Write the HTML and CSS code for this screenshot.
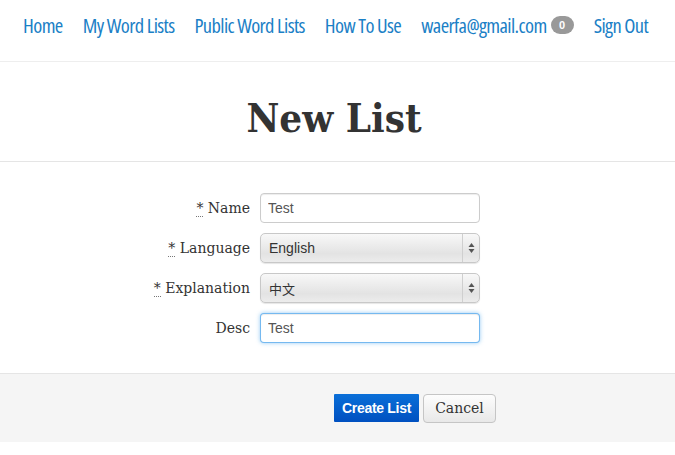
FILE: index.html
```html
<!DOCTYPE html>
<html>
<head>
<meta charset="utf-8">
<link rel="stylesheet" href="styles.css">
</head>
<body>
<nav class="nav">
  <a class="nav-link" href="#">Home</a>
  <a class="nav-link" href="#">My Word Lists</a>
  <a class="nav-link" href="#">Public Word Lists</a>
  <a class="nav-link" href="#">How To Use</a>
  <a class="nav-link" href="#">waerfa@gmail.com <span class="badge">0</span></a>
  <a class="nav-link" href="#">Sign Out</a>
</nav>
<header class="title">
  <h1>New List</h1>
</header>
<form class="form">
  <div class="row">
    <label class="label"><abbr class="req">*</abbr> Name</label>
    <input class="field" type="text" value="Test">
  </div>
  <div class="row">
    <label class="label"><abbr class="req">*</abbr> Language</label>
    <div class="select"><span>English</span><span class="arrows"><svg width="7" height="12" viewBox="0 0 7 12"><path d="M3.5 1 L6.5 5 H0.5Z M3.5 11 L6.5 7 H0.5Z" fill="#555"/></svg></span></div>
  </div>
  <div class="row">
    <label class="label"><abbr class="req">*</abbr> Explanation</label>
    <div class="select"><span class="cjk">中文</span><span class="arrows"><svg width="7" height="12" viewBox="0 0 7 12"><path d="M3.5 1 L6.5 5 H0.5Z M3.5 11 L6.5 7 H0.5Z" fill="#555"/></svg></span></div>
  </div>
  <div class="row">
    <label class="label">Desc</label>
    <input class="field focus" type="text" value="Test">
  </div>
  <div class="actions">
    <button class="btn-primary" type="button">Create List</button>
    <button class="btn" type="button">Cancel</button>
  </div>
</form>
</body>
</html>
```
FILE: styles.css
```css
html, body { margin: 0; padding: 0; background: #fff; }
body { width: 675px; height: 455px; overflow: hidden; }
.nav {
  display: flex;
  align-items: flex-start;
  gap: 20px;
  padding-left: 23px;
  padding-top: 12px;
  box-sizing: border-box;
  height: 62px;
  border-bottom: 1px solid #eeeeee;
}
.nav-link {
  font-family: "Open Sans", sans-serif;
  font-stretch: condensed;
  font-size: 20.5px;
  line-height: 26px;
  letter-spacing: -0.6px;
  color: #1b80c6;
  text-decoration: none;
  display: flex;
  align-items: center;
  white-space: nowrap;
}
.badge {
  display: inline-block;
  margin-left: 4px;
  background: #999999;
  color: #fff;
  font-family: "Liberation Sans", sans-serif;
  font-stretch: normal;
  font-weight: bold;
  font-size: 11px;
  letter-spacing: 0;
  line-height: 18px;
  height: 18px;
  width: 23px;
  text-align: center;
  border-radius: 9px;
}
.title {
  height: 100px;
  box-sizing: border-box;
  padding-top: 12px;
  padding-right: 7px;
  border-bottom: 1px solid #e5e5e5;
  display: flex;
  align-items: center;
  justify-content: center;
}
.title h1 {
  margin: 0;
  font-family: "DejaVu Serif", serif;
  font-stretch: condensed;
  font-weight: bold;
  font-size: 40px;
  color: #333333;
}
.form { margin: 0; padding-top: 31px; }
.row {
  display: flex;
  align-items: center;
  height: 30px;
  margin-bottom: 10px;
}
.label {
  width: 260px;
  box-sizing: border-box;
  padding-right: 10px;
  text-align: right;
  font-family: "DejaVu Serif", serif;
  font-size: 14px;
  color: #333;
}
.req {
  text-decoration: none;
  border-bottom: 1px dotted #777;
  cursor: help;
}
.field {
  width: 220px;
  height: 30px;
  box-sizing: border-box;
  border: 1px solid #cccccc;
  border-radius: 4px;
  padding: 4px 7px;
  font-family: "Liberation Sans", sans-serif;
  font-size: 14px;
  color: #555;
  box-shadow: inset 0 1px 1px rgba(0,0,0,0.075);
  outline: none;
}
.field.focus {
  border-color: rgba(82,168,236,0.8);
  box-shadow: inset 0 1px 1px rgba(0,0,0,0.075), 0 0 4px rgba(82,168,236,0.6);
}
.select {
  width: 220px;
  height: 30px;
  box-sizing: border-box;
  border: 1px solid #c8c8c8;
  border-radius: 5px;
  background: linear-gradient(#f8f8f8, #e3e3e3 70%, #ececec);
  box-shadow: 0 1px 1px rgba(0,0,0,0.1);
  display: flex;
  align-items: center;
  justify-content: space-between;
  padding-left: 8px;
  font-family: "Liberation Sans", sans-serif;
  font-size: 14px;
  color: #333;
}
.cjk { font-family: "Noto Sans CJK SC", sans-serif; font-size: 13px; }
.arrows {
  width: 16px;
  height: 28px;
  border-left: 1px solid #cfcfcf;
  display: flex;
  align-items: center;
  justify-content: center;
}
.actions {
  margin-top: 30px;
  height: 69px;
  box-sizing: border-box;
  background: #f5f5f5;
  border-top: 1px solid #e5e5e5;
  display: flex;
  align-items: center;
  gap: 4px;
  padding-left: 334px;
}
.btn-primary {
  height: 28px;
  width: 85px;
  border: none;
  border-radius: 1px;
  background: linear-gradient(#0a6fd8, #0050c0);
  color: #fff;
  font-family: "Liberation Sans", sans-serif;
  font-weight: bold;
  font-size: 14px;
  letter-spacing: -0.3px;
  padding: 0;
}
.btn {
  height: 29px;
  width: 73px;
  border: 1px solid #c5c5c5;
  border-radius: 4px;
  background: linear-gradient(#fdfdfd, #e8e8e8);
  color: #333;
  font-family: "DejaVu Serif", serif;
  font-size: 14px;
  padding: 0;
}
```
